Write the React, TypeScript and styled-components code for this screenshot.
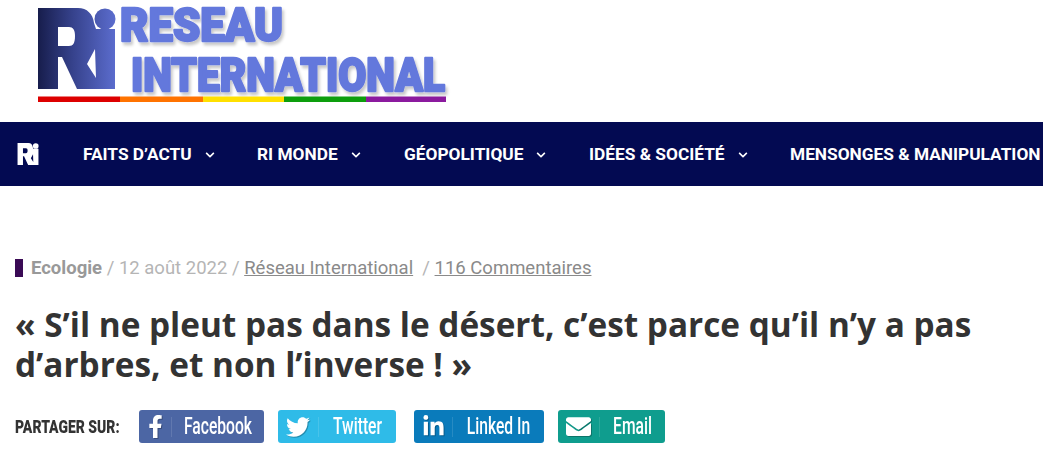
import React from "react";
import styled, { createGlobalStyle } from "styled-components";
import { FaFacebookF, FaTwitter, FaLinkedinIn, FaEnvelope, FaChevronDown } from "react-icons/fa";

const Global = createGlobalStyle`
  html, body { margin: 0; padding: 0; background: #fff; overflow: hidden; }
  body { font-family: Roboto, "Liberation Sans", sans-serif; }
`;

const Page = styled.div`
  width: 1043px;
  height: 453px;
  overflow: hidden;
`;
const Header = styled.header`
  height: 122px;
  display: flex;
  align-items: flex-start;
`;
const LogoSvg = styled.svg`
  display: block;
  width: 460px;
  height: 122px;
`;
const Nav = styled.nav`
  height: 64px;
  background: #030a52;
  display: flex;
  align-items: center;
  padding-left: 17px;
  white-space: nowrap;
  overflow: hidden;
`;
const NavMark = styled.svg`
  width: 22px;
  height: 22px;
  flex: none;
  margin-right: 44px;
`;
const NavItem = styled.a<{ $w: number }>`
  flex: none;
  width: ${(p) => p.$w}px;
  display: flex;
  align-items: center;
  color: #fff;
  font: 700 17.3px Roboto, sans-serif;
  text-transform: uppercase;
`;
const Chevron = styled(FaChevronDown)`
  width: 10px;
  height: 10px;
  margin-left: 13px;
  margin-top: 1px;
`;
const Main = styled.main`
  padding: 73px 15px 0;
`;
const Meta = styled.div`
  display: flex;
  align-items: center;
  height: 18px;
  font: 400 18.5px/18px Roboto, sans-serif;
  color: #b5b5b5;
  white-space: pre;
`;
const Marker = styled.span`
  width: 8px;
  height: 18px;
  background: #3a0a55;
  margin-right: 8px;
`;
const Category = styled.strong`
  font-weight: 700;
  color: #999;
`;
const MetaLink = styled.a`
  color: #8a8a8a;
  text-decoration: underline;
`;
const Title = styled.h1`
  margin: 27px 0 0;
  font: 700 33.35px/40px "Open Sans", sans-serif;
  color: #333;
  width: 1000px;
`;
const Share = styled.div`
  display: flex;
  align-items: center;
  margin-top: 26px;
`;
const ShareLabel = styled.span`
  flex: none;
  width: 124px;
  white-space: nowrap;
  font: 900 18px/33px Roboto, sans-serif;
  color: #333;
  text-transform: uppercase;
  transform: scaleX(0.775);
  transform-origin: left center;
`;
const ShareButton = styled.a<{ $bg: string; $w: number; $gap: number }>`
  flex: none;
  box-sizing: border-box;
  width: ${(p) => p.$w}px;
  height: 33px;
  margin-right: ${(p) => p.$gap}px;
  border-radius: 3px;
  background: ${(p) => p.$bg};
  color: #fff;
  display: flex;
  align-items: center;
`;
const IconSlot = styled.span<{ $w: number }>`
  flex: none;
  width: ${(p) => p.$w}px;
  display: flex;
  justify-content: center;
  align-items: center;
  border-right: 1px solid rgba(255, 255, 255, 0.12);
  height: 20px;
  svg { filter: drop-shadow(1px 1px 0 rgba(0, 0, 0, 0.25)); }
`;
const ButtonLabel = styled.span`
  flex: 1;
  min-width: 0;
  display: flex;
  justify-content: center;
  white-space: nowrap;
  font: 500 23px/32px Roboto, sans-serif;
  transform: scaleX(0.68);
`;

const LogoGradient = () => (
  <linearGradient id="ri" x1="38" x2="115" y1="0" y2="0" gradientUnits="userSpaceOnUse">
    <stop offset="0" stopColor="#171d4c" />
    <stop offset="0.45" stopColor="#36428c" />
    <stop offset="1" stopColor="#5b6ccd" />
  </linearGradient>
);

const RI_PATH =
  "M38 8H78C87 8 93 14 94 23L96 29H115V89H77L62 57H58V89H38ZM58 27V46H69C73 46 75 43 75 36C75 30 73 27 69 27ZM95 49L87 64L96 78Z";

const Logo = () => (
  <LogoSvg viewBox="0 0 460 122">
    <defs>
      <LogoGradient />
      <filter id="shadow" x="-5%" y="-10%" width="110%" height="130%">
        <feDropShadow dx="2" dy="3" stdDeviation="1.5" floodColor="#000" floodOpacity="0.22" />
      </filter>
    </defs>
    <path d={RI_PATH} fill="url(#ri)" fillRule="evenodd" />
    <circle cx="105" cy="19" r="10.5" fill="url(#ri)" />
    <g
      filter="url(#shadow)"
      fill="#6478dc"
      stroke="#6478dc"
      strokeWidth="2.4"
      strokeLinejoin="round"
      fontFamily="Roboto, sans-serif"
      fontWeight="900"
      fontSize="47"
    >
      <text x="120" y="41" textLength="163" lengthAdjust="spacingAndGlyphs">RESEAU</text>
      <text x="131" y="90.5" textLength="314" lengthAdjust="spacingAndGlyphs">INTERNATIONAL</text>
    </g>
    <rect x="38" y="96.5" width="82" height="5.5" fill="#dd0000" />
    <rect x="120" y="96.5" width="83" height="5.5" fill="#ff7300" />
    <rect x="203" y="96.5" width="81" height="5.5" fill="#ffe000" />
    <rect x="284" y="96.5" width="82" height="5.5" fill="#0d9e0d" />
    <rect x="366" y="96.5" width="80" height="5.5" fill="#8b1a9e" />
  </LogoSvg>
);

const items: [string, number][] = [
  ["Faits d’actu", 174],
  ["RI Monde", 147],
  ["Géopolitique", 185],
  ["Idées & Société", 201],
];

export default function App() {
  return (
    <Page>
      <Global />
      <Header>
        <Logo />
      </Header>
      <Nav>
        <NavMark viewBox="38 8 77 81">
          <path d={RI_PATH} fill="#fff" fillRule="evenodd" />
          <circle cx="105" cy="19" r="10.5" fill="#fff" />
        </NavMark>
        {items.map(([label, w]) => (
          <NavItem key={label} $w={w}>
            {label}
            <Chevron />
          </NavItem>
        ))}
        <NavItem $w={260}>Mensonges &amp; Manipulation</NavItem>
      </Nav>
      <Main>
        <Meta>
          <Marker />
          <Category>Ecologie</Category>
          {" / 12 août 2022 / "}
          <MetaLink>Réseau International</MetaLink>
          {"  / "}
          <MetaLink>116 Commentaires</MetaLink>
        </Meta>
        <Title>« S’il ne pleut pas dans le désert, c’est parce qu’il n’y a pas d’arbres, et non l’inverse ! »</Title>
        <Share>
          <ShareLabel>Partager sur:</ShareLabel>
          <ShareButton $bg="#4c66a4" $w={125} $gap={14}>
            <IconSlot $w={32}><FaFacebookF size={23} /></IconSlot>
            <ButtonLabel>Facebook</ButtonLabel>
          </ShareButton>
          <ShareButton $bg="#2fbbe8" $w={118} $gap={18}>
            <IconSlot $w={40}><FaTwitter size={24} /></IconSlot>
            <ButtonLabel>Twitter</ButtonLabel>
          </ShareButton>
          <ShareButton $bg="#0a7bbb" $w={130} $gap={14}>
            <IconSlot $w={38}><FaLinkedinIn size={23} /></IconSlot>
            <ButtonLabel>Linked In</ButtonLabel>
          </ShareButton>
          <ShareButton $bg="#0f9d8e" $w={107} $gap={0}>
            <IconSlot $w={41}><FaEnvelope size={25} /></IconSlot>
            <ButtonLabel>Email</ButtonLabel>
          </ShareButton>
        </Share>
      </Main>
    </Page>
  );
}
